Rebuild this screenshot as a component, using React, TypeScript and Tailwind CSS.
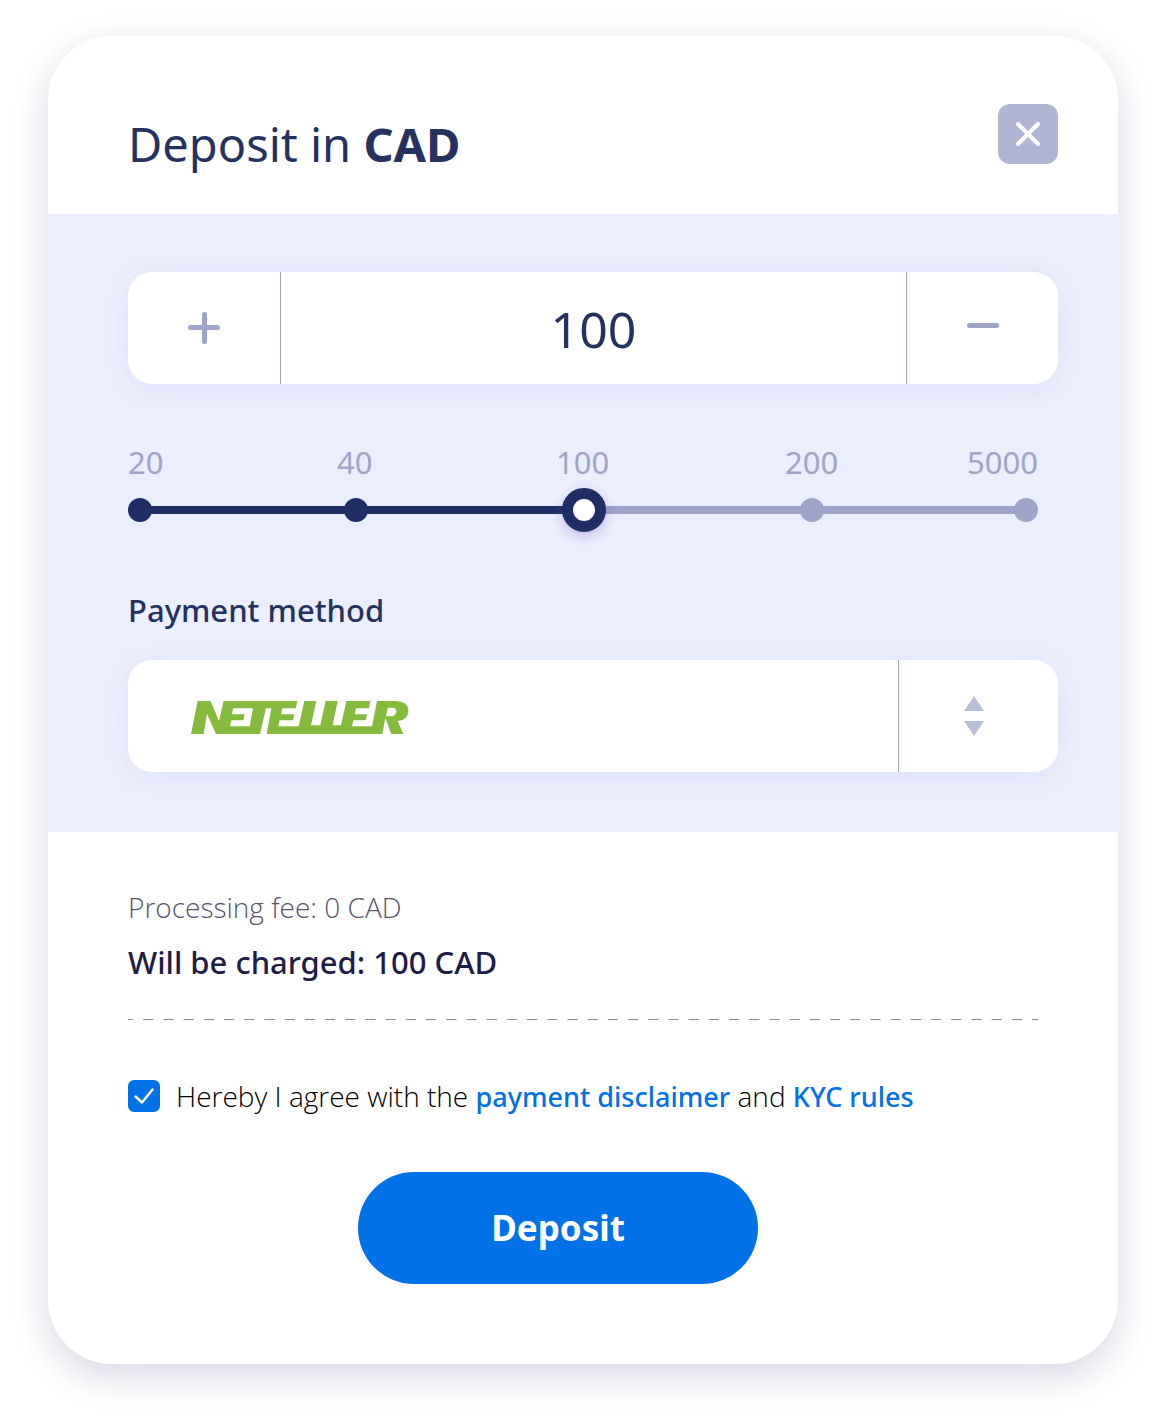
import { Fragment, useState } from 'react';

const STOPS = [20, 40, 100, 200, 5000];
const SEGMENTS = ['grow-[192]', 'grow-[194]', 'grow-[194]', 'grow-[190]'];

function CloseIcon() {
  return (
    <svg viewBox="0 0 24 24" className="size-6" fill="none" stroke="#fff" strokeWidth="4" strokeLinecap="round" aria-hidden="true">
      <path d="M2 2 22 22M22 2 2 22" />
    </svg>
  );
}

function PlusIcon() {
  return (
    <svg viewBox="0 0 32 32" className="size-8" fill="#9fa4c9" aria-hidden="true">
      <rect x="0" y="13" width="32" height="5" rx="2.5" />
      <rect x="14" y="0" width="5" height="32" rx="2.5" />
    </svg>
  );
}

function MinusIcon() {
  return (
    <svg viewBox="0 0 32 32" className="size-8" fill="#9fa4c9" aria-hidden="true">
      <rect x="0" y="11" width="32" height="5" rx="2.5" />
    </svg>
  );
}

function SortIcon() {
  return (
    <svg viewBox="0 0 20 40" className="h-10 w-5" fill="#b8bdd9" aria-hidden="true">
      <path d="M10 0 20 15H0ZM10 40 0 25H20Z" />
    </svg>
  );
}

function NetellerLogo() {
  return (
    <svg viewBox="32 62 654 99" className="h-[33px] w-[218px]" fill="#84bb3c" fillRule="evenodd" aria-hidden="true">
      <path d="M52 62H91L116 122 130 62H351L346 84H306L303 102H342L338 120H298L294 138H355L372 62H408L392 135H420L436 62H472L457 135H482L498 62H570L566 84H527L523 102H560L556 120H519L515 138H575L590 62H642C672 62 685 74 684 92C683 110 673 120 652 122L669 161H633L615 113 606 161H259L273 84H257L239 161H107L80 100 70 161H32ZM158 84 155 102H193L189 120H153L149 138H208L218 84ZM622 82 617 108H630C651 108 655 82 636 82Z" />
    </svg>
  );
}

function AmountSlider({ index, onChange }: { index: number; onChange: (i: number) => void }) {
  return (
    <div className="mr-5">
      <div className="grid grid-cols-[209fr_219fr_229fr_182fr_71fr] text-[31px] leading-10 text-[#9fa4c9]">
        {STOPS.map((s) => (
          <span key={s}>{s}</span>
        ))}
      </div>
      <div className="relative mt-1.5 flex h-11 items-center">
        {STOPS.map((s, i) => (
          <Fragment key={s}>
            {i > 0 && (
              <div className={`-mx-1 h-2 basis-0 ${SEGMENTS[i - 1]} ${i <= index ? 'bg-[#202e66]' : 'bg-[#9fa4c9]'}`} />
            )}
            {i === index ? (
              <div className="relative size-11 shrink-0 rounded-full border-[11px] border-[#202e66] bg-white shadow-[0_4px_12px_rgba(105,70,190,0.3)]" />
            ) : (
              <div className={`relative size-6 shrink-0 rounded-full ${i < index ? 'bg-[#202e66]' : 'bg-[#9fa4c9]'}`} />
            )}
          </Fragment>
        ))}
        <input
          type="range"
          aria-label="Deposit amount"
          min={0}
          max={4}
          step={1}
          value={index}
          onChange={(e) => onChange(Number(e.target.value))}
          className="absolute inset-0 size-full cursor-pointer opacity-0"
        />
      </div>
    </div>
  );
}

export default function App() {
  const [index, setIndex] = useState(2);
  const [agreed, setAgreed] = useState(true);
  const amount = STOPS[index];

  return (
    <div className="bg-white px-12 pt-9 pb-[60px] font-['Noto_Sans',sans-serif]">
      <main className="overflow-hidden rounded-[64px] bg-white shadow-[0_12px_36px_rgba(30,30,100,0.18)]">
        <header className="flex items-start justify-between pt-[68px] pr-[60px] pb-[50px] pl-20">
          <h1 className="mt-3.5 -mb-2 text-[47px] leading-[52px] text-[#25315f]">
            Deposit in <strong className="font-bold">CAD</strong>
          </h1>
          <button type="button" aria-label="Close" className="flex size-[60px] items-center justify-center rounded-xl bg-[#b0b5d3]">
            <CloseIcon />
          </button>
        </header>

        <section className="bg-[#eaeefd] pt-[58px] pr-[60px] pb-[60px] pl-20">
          <div className="flex h-28 overflow-hidden rounded-3xl bg-white shadow-[0_4px_32px_rgba(80,80,160,0.08)]">
            <button
              type="button"
              aria-label="Increase amount"
              onClick={() => setIndex(Math.min(index + 1, 4))}
              className="flex w-[153px] shrink-0 items-center justify-center border-r border-[#9fa4c9]"
            >
              <PlusIcon />
            </button>
            <input
              aria-label="Amount"
              readOnly
              value={amount}
              className="min-w-0 grow bg-transparent pt-0.5 text-center text-[50px] text-[#25315f] outline-none"
            />
            <button
              type="button"
              aria-label="Decrease amount"
              onClick={() => setIndex(Math.max(index - 1, 0))}
              className="flex w-[152px] shrink-0 items-center justify-center border-l border-[#9fa4c9]"
            >
              <MinusIcon />
            </button>
          </div>

          <div className="mt-[58px]">
            <AmountSlider index={index} onChange={setIndex} />
          </div>

          <label htmlFor="method" className="mt-[58px] block text-[31px] leading-10 font-medium text-[#25315f]">
            Payment method
          </label>
          <div className="relative mt-[30px] flex h-28 overflow-hidden rounded-3xl bg-white shadow-[0_4px_32px_rgba(80,80,160,0.08)]">
            <div className="flex grow items-center pt-0.5 pl-[63px]">
              <NetellerLogo />
            </div>
            <div className="flex w-40 items-center border-l border-[#9fa4c9] pl-[65px]">
              <SortIcon />
            </div>
            <select id="method" className="absolute inset-0 size-full cursor-pointer opacity-0">
              <option>Neteller</option>
            </select>
          </div>
        </section>

        <section className="px-20 pt-[55px] pb-20">
          <p className="font-['Open_Sans',sans-serif] text-[28px] leading-10 font-light text-[#55536f]">Processing fee: 0 CAD</p>
          <p className="mt-[15px] text-[31px] leading-10 font-medium text-[#1f1d46]">Will be charged: {amount} CAD</p>
          <svg className="mt-[37px] block h-px w-full" aria-hidden="true">
            <line x1="0" y1="0.5" x2="100%" y2="0.5" stroke="#8a889c" strokeDasharray="10.2 10" strokeDashoffset="5" />
          </svg>
          <div className="mt-14 flex items-center gap-4">
            <div className="relative size-8 shrink-0">
              <input
                id="agree"
                type="checkbox"
                checked={agreed}
                onChange={(e) => setAgreed(e.target.checked)}
                className="block size-8 appearance-none rounded-md border-2 border-[#0071e6] checked:bg-[#0071e6]"
              />
              {agreed && (
                <svg viewBox="0 0 32 32" className="pointer-events-none absolute inset-0" fill="none" stroke="#fff" strokeWidth="2.5" strokeLinecap="round" strokeLinejoin="round" aria-hidden="true">
                  <path d="M7.500 16.500 14 22.500 24.500 9.500" />
                </svg>
              )}
            </div>
            <label htmlFor="agree" className="font-['Open_Sans',sans-serif] text-[28px] leading-10 font-light text-black">
              Hereby I agree with the{' '}
              <a href="#disclaimer" className="font-['Noto_Sans',sans-serif] text-[27px] leading-8 font-medium text-[#0071e6]">payment disclaimer</a> and{' '}
              <a href="#kyc" className="font-['Noto_Sans',sans-serif] text-[27px] leading-8 font-medium text-[#0071e6]">KYC rules</a>
            </label>
          </div>
          <div className="mt-14 mr-[30px] -ml-5 flex justify-center">
            <button type="button" className="h-28 w-[400px] rounded-full bg-[#0071e6] text-[35px] font-bold text-white">
              Deposit
            </button>
          </div>
        </section>
      </main>
    </div>
  );
}
